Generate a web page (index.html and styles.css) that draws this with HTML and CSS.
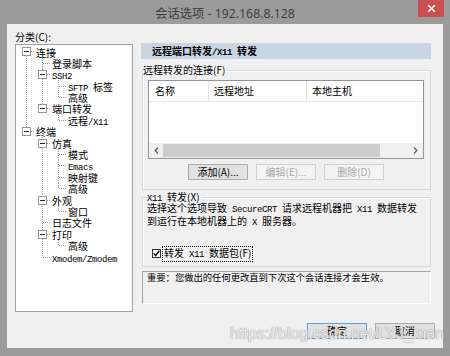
FILE: index.html
```html
<!DOCTYPE html>
<html lang="zh-CN">
<head>
  <meta charset="UTF-8">
  <title>会话选项 - 192.168.8.128</title>
  <link rel="stylesheet" href="styles.css">
</head>
<body>
  <div class="window">
    <!-- sarlavha -->
    <div class="titlebar">
      <span></span>
      <span class="title">会话选项 - 192.168.8.128</span>
      <span class="close-btn">
        <svg width="9" height="9" viewBox="0 0 9 9"><path d="M1.2 1.2L7.8 7.8M7.8 1.2L1.2 7.8" stroke="#fff" stroke-width="1.6"/></svg>
      </span>
    </div>

    <div class="client">
      <div class="main">
        <!-- kategoriya daraxti -->
        <div class="category">
          <div class="cat-label">分类(C):</div>
          <div class="tree">
            <ul class="tree-root">
              <li class="first">
                <div class="node"><span class="ln"><span class="box"></span></span><span class="txt">连接</span></div>
                <ul>
                  <li><div class="node"><span class="ln"></span><span class="txt">登录脚本</span></div></li>
                  <li>
                    <div class="node"><span class="ln"><span class="box"></span></span><span class="txt"><span class="en">SSH2</span></span></div>
                    <ul>
                      <li><div class="node"><span class="ln"></span><span class="txt"><span class="en">SFTP </span>标签</span></div></li>
                      <li class="last"><div class="node"><span class="ln"></span><span class="txt">高级</span></div></li>
                    </ul>
                  </li>
                  <li class="last">
                    <div class="node"><span class="ln"><span class="box"></span></span><span class="txt">端口转发</span></div>
                    <ul>
                      <li class="last"><div class="node"><span class="ln"></span><span class="txt">远程<span class="en">/X11</span></span></div></li>
                    </ul>
                  </li>
                </ul>
              </li>
              <li class="last">
                <div class="node"><span class="ln"><span class="box"></span></span><span class="txt">终端</span></div>
                <ul>
                  <li>
                    <div class="node"><span class="ln"><span class="box"></span></span><span class="txt">仿真</span></div>
                    <ul>
                      <li><div class="node"><span class="ln"></span><span class="txt">模式</span></div></li>
                      <li><div class="node"><span class="ln"></span><span class="txt"><span class="en">Emacs</span></span></div></li>
                      <li><div class="node"><span class="ln"></span><span class="txt">映射键</span></div></li>
                      <li class="last"><div class="node"><span class="ln"></span><span class="txt">高级</span></div></li>
                    </ul>
                  </li>
                  <li>
                    <div class="node"><span class="ln"><span class="box"></span></span><span class="txt">外观</span></div>
                    <ul>
                      <li class="last"><div class="node"><span class="ln"></span><span class="txt">窗口</span></div></li>
                    </ul>
                  </li>
                  <li><div class="node"><span class="ln"></span><span class="txt">日志文件</span></div></li>
                  <li>
                    <div class="node"><span class="ln"><span class="box"></span></span><span class="txt">打印</span></div>
                    <ul>
                      <li class="last"><div class="node"><span class="ln"></span><span class="txt">高级</span></div></li>
                    </ul>
                  </li>
                  <li class="last"><div class="node"><span class="ln"></span><span class="txt"><span class="en">Xmodem/Zmodem</span></span></div></li>
                </ul>
              </li>
            </ul>
          </div>
        </div>

        <!-- o'ng panel -->
        <div class="panel">
          <div class="panel-head">远程端口转发<span class="en">/X11 </span>转发</div>

          <fieldset class="group group-remote">
            <legend>远程转发的连接(F)</legend>
            <div class="listview">
              <div class="lv-head">
                <span class="col col-name">名称</span>
                <span class="col col-addr">远程地址</span>
                <span class="col col-host">本地主机</span>
              </div>
              <div class="lv-body"></div>
              <div class="hscroll">
                <span class="arrow"><svg width="5" height="7" viewBox="0 0 5 7"><path d="M4 0.5L1.2 3.5L4 6.5" fill="none" stroke="#606060" stroke-width="1.3"/></svg></span>
                <span class="thumb"></span>
                <span class="track"></span>
                <span class="arrow"><svg width="5" height="7" viewBox="0 0 5 7"><path d="M1 0.5L3.8 3.5L1 6.5" fill="none" stroke="#606060" stroke-width="1.3"/></svg></span>
              </div>
            </div>
            <div class="btn-row">
              <button class="btn">添加(A)...</button>
              <button class="btn" disabled>编辑(E)...</button>
              <button class="btn" disabled>删除(D)</button>
            </div>
          </fieldset>

          <fieldset class="group group-x11">
            <legend><span class="en">X11 </span>转发(X)</legend>
            <p class="x11-desc">选择这个选项导致<span class="en"> SecureCRT </span>请求远程机器把<span class="en"> X11 </span>数据转发<br>到运行在本地机器上的<span class="en"> X </span>服务器。</p>
            <label class="check">
              <span class="checkbox"><svg width="7" height="7" viewBox="0 0 7 7"><path d="M0.6 3.4L2.6 5.6L6.4 0.8" fill="none" stroke="#000" stroke-width="1.4"/></svg></span>
              <span class="check-text">转发<span class="en"> X11 </span>数据包(F)</span>
            </label>
          </fieldset>

          <div class="notice">重要：您做出的任何更改直到下次这个会话连接才会生效。</div>
        </div>
      </div>

      <div class="actions">
        <button class="btn btn-default">确定</button>
        <button class="btn">取消</button>
      </div>
    </div>

    <div class="watermark">https://blog.csdn.net/LYJ_man</div>
  </div>
</body>
</html>
```

FILE: styles.css
```css
* { margin: 0; padding: 0; box-sizing: border-box; }
body {
  width: 450px;
  height: 356px;
  overflow: hidden;
  background-color: #9b9b9b;
  font-family: "Noto Sans CJK SC", sans-serif;
  font-size: 10px;
  color: #000;
}
.window {
  position: relative;
  width: 450px;
  height: 356px;
  background-color: #9b9b9b;
  display: flex;
  flex-direction: column;
}
/* sarlavha qatori */
.titlebar {
  height: 24px;
  display: grid;
  grid-template-columns: 1fr auto 1fr;
  align-items: center;
}
.title {
  font-family: "Open Sans", "Noto Sans CJK SC", sans-serif;
  font-size: 12.3px;
  color: #3a3a3a;
  padding-top: 1px;
  white-space: nowrap;
}
.close-btn {
  justify-self: end;
  align-self: start;
  width: 26px;
  height: 17px;
  margin-right: 6px;
  background-color: #c75050;
  display: flex;
  align-items: center;
  justify-content: center;
}
.client {
  margin: 0 7px;
  height: 324px;
  background-color: #f0f0f0;
  padding: 6px 8px 9px 8px;
  display: flex;
  flex-direction: column;
}
.main {
  display: grid;
  grid-template-columns: 118px 290px;
  column-gap: 8px;
  align-items: start;
}
.en {
  font-family: "Liberation Mono", monospace;
  font-size: 9px;
  letter-spacing: -0.4px;
}
/* daraxt */
.cat-label {
  height: 14px;
  line-height: 14px;
}
.tree {
  height: 268px;
  border: 1px solid #a0a0a0;
  background-color: #fff;
  padding: 1.3px 0 0 6px;
  overflow: hidden;
}
.tree ul {
  list-style: none;
}
.tree ul ul {
  margin-left: 16px;
}
.tree li {
  background: repeating-linear-gradient(to bottom, #a0a0a0 0 1px, transparent 1px 2px) 4px 0 / 1px 100% no-repeat;
}
.tree li.last {
  background-size: 1px 6px;
}
.tree-root > li.first {
  background-position: 4px 6px;
}
.node {
  display: flex;
  align-items: center;
  height: 11.4px;
  white-space: nowrap;
}
.txt {
  white-space: pre;
}
.ln {
  flex: none;
  width: 14px;
  height: 100%;
  display: flex;
  align-items: center;
  background: repeating-linear-gradient(to right, #a0a0a0 0 1px, transparent 1px 2px) 5px center / 8px 1px no-repeat;
}
.box {
  width: 9px;
  height: 9px;
  border: 1px solid #969696;
  background: linear-gradient(#222, #222) center / 5px 1px no-repeat, #fff;
}
/* o'ng panel */
.panel {
  padding-top: 13px;
}
.panel-head {
  height: 16px;
  line-height: 16px;
  background-color: #c8d6e4;
  padding-left: 11px;
  font-weight: bold;
  white-space: nowrap;
}
.panel-head .en {
  font-weight: bold;
}
.group {
  border: 1px solid #d8d8d8;
  box-shadow: inset 1px 1px 0 #fff;
  min-width: 0;
  margin-left: 1px;
}
.group legend {
  height: 12px;
  line-height: 12px;
  padding: 0 2px 0 0;
  white-space: nowrap;
}
.group-remote {
  margin-top: 5px;
  padding: 0 6px 9px 0;
}
.listview {
  margin: 4px 0 0 5px;
  height: 79px;
  border: 1px solid #8c96a0;
  background-color: #fff;
  display: flex;
  flex-direction: column;
}
.lv-head {
  height: 21px;
  border-bottom: 1px solid #e3eaf2;
  display: flex;
}
.col {
  line-height: 20px;
  border-right: 1px solid #e5e5e5;
  padding-left: 5px;
}
.col-name { width: 60px; padding-left: 6px; }
.col-addr { width: 98px; }
.col-host { flex: 1; border-right: none; }
.lv-body {
  flex: 1;
}
.hscroll {
  height: 15px;
  background-color: #f0f0f0;
  display: flex;
}
.arrow {
  width: 14px;
  display: flex;
  align-items: center;
  justify-content: center;
}
.hscroll .arrow:last-child {
  width: 15px;
}
.thumb {
  width: 217px;
  margin: 1px 0;
  background-color: #cdcdcd;
}
.track {
  flex: 1;
}
.btn-row {
  display: flex;
  justify-content: center;
  gap: 8px;
  margin-top: 5px;
  padding-left: 5px;
}
.btn {
  width: 60px;
  height: 16px;
  border: 1px solid #adadad;
  background-color: #e1e1e1;
  font-family: "Noto Sans CJK SC", sans-serif;
  font-size: 10px;
  line-height: 14px;
  color: #000;
  padding: 0;
}
.btn:disabled {
  background-color: #f4f4f4;
  border-color: #cfcfcf;
  color: #a6a6a6;
}
.btn-default {
  border-color: #5f9fe3;
}
.group-x11 {
  margin-top: 1px;
  padding: 0 4px 6px 4px;
}
.x11-desc {
  line-height: 10.5px;
  white-space: nowrap;
}
.check {
  display: flex;
  align-items: center;
  height: 13px;
  margin: 19px 0 0 5px;
}
.checkbox {
  width: 9px;
  height: 9px;
  border: 1px solid #333;
  background-color: #fff;
  display: flex;
  align-items: center;
  justify-content: center;
}
.check-text {
  margin-left: 1px;
  border: 1px dotted #000;
  line-height: 11px;
  padding: 0 1px;
  white-space: nowrap;
}
.notice {
  margin: 4px 0 0 1px;
  height: 33px;
  border: 1px solid;
  border-color: #a0a0a0 #fff #fff #a0a0a0;
  padding-left: 4px;
  font-size: 9.3px;
  line-height: 10px;
  white-space: nowrap;
}
/* pastki tugmalar */
.actions {
  display: flex;
  justify-content: flex-end;
  gap: 8px;
  margin-top: 11px;
}
/* suv belgisi */
.watermark {
  position: absolute;
  left: 230px;
  top: 325px;
  font-family: "Liberation Sans", sans-serif;
  font-size: 16px;
  color: rgba(255, 255, 255, 0.85);
  text-shadow: 0 0 1px rgba(120, 120, 120, 0.8), 0 0 1px rgba(120, 120, 120, 0.6);
  pointer-events: none;
  white-space: nowrap;
}
```
